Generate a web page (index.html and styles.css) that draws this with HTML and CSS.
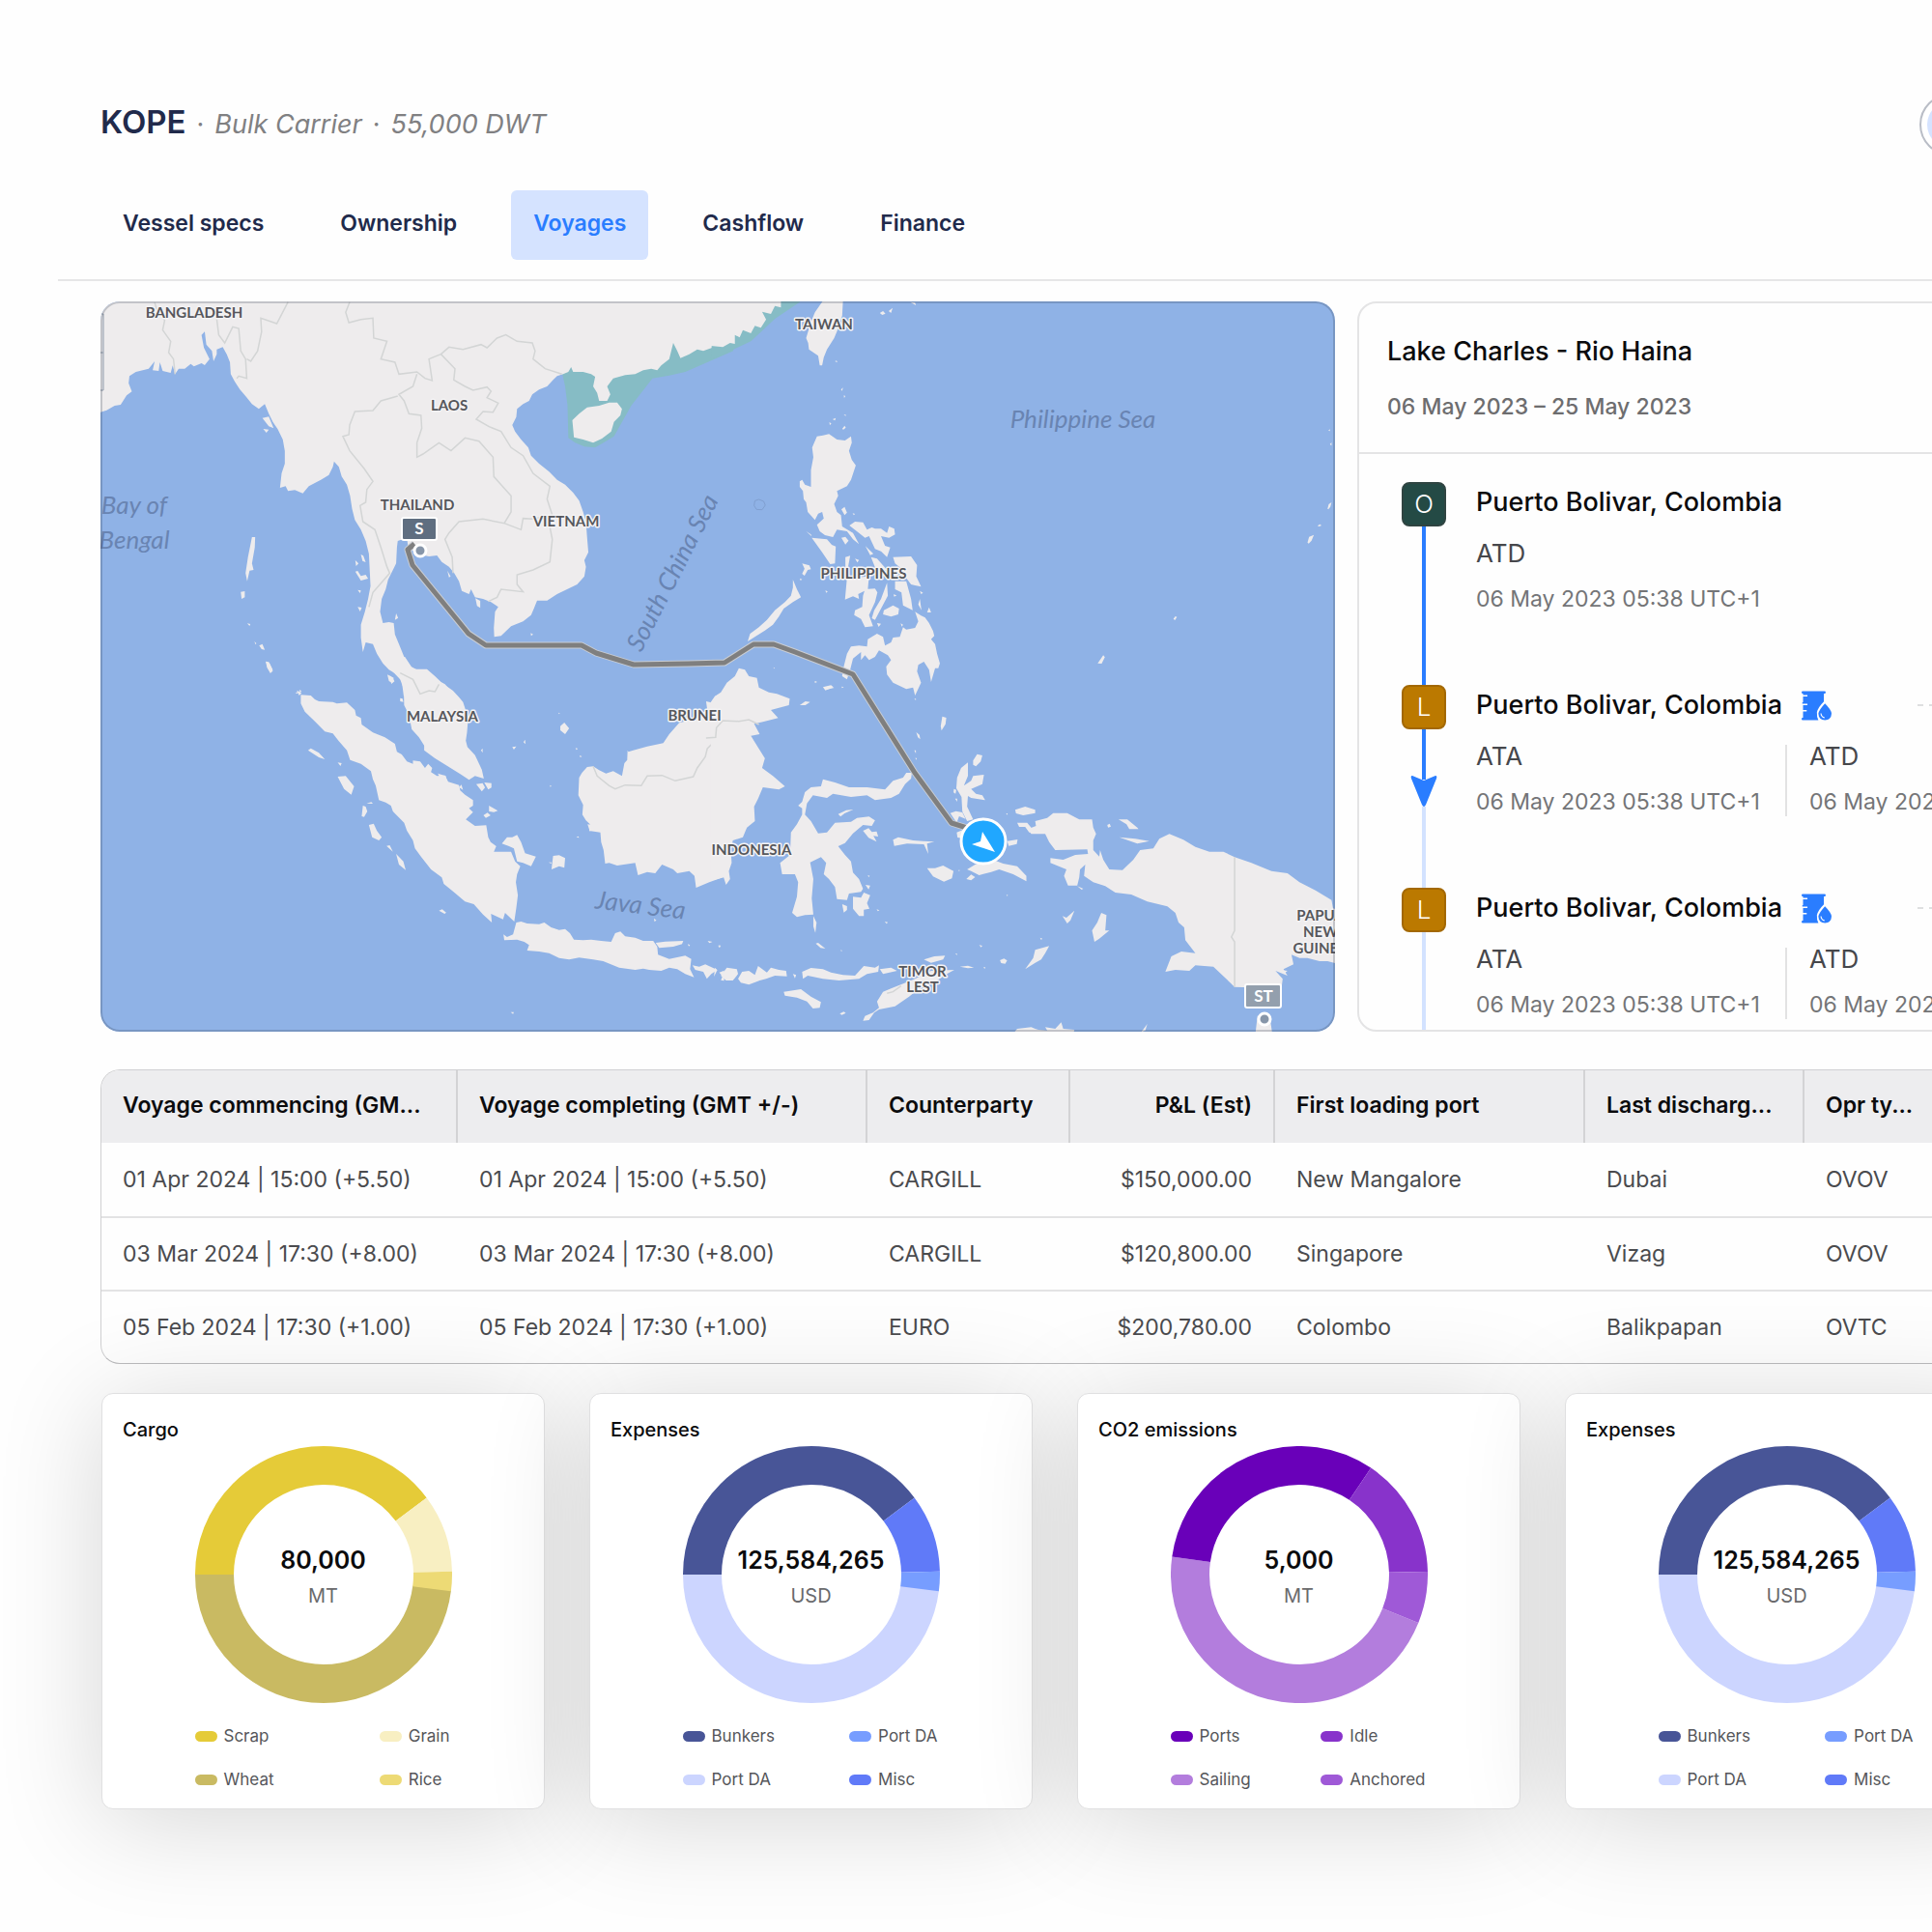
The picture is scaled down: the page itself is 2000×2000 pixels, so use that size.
FILE: index.html
```html
<!DOCTYPE html>
<html lang="en">
<head>
  <meta charset="UTF-8">
  <meta name="viewport" content="width=device-width, initial-scale=1.0">
  <title>KOPE - Voyages</title>
  <link rel="stylesheet" href="styles.css">
</head>
<body>
<div class="page">
  <div class="app">
    <header class="header">
      <div class="title-row">
        <div class="vessel">
          <h1>KOPE</h1>
          <p class="vessel-info"><span>·</span><em>Bulk Carrier</em><span>·</span><em>55,000 DWT</em></p>
        </div>
        <button class="avatar" type="button" aria-label="Account"><span class="avatar-inner"></span></button>
      </div>
      <nav class="tabs">
        <a class="tab" href="#specs">Vessel specs</a>
        <a class="tab" href="#ownership">Ownership</a>
        <a class="tab active" href="#voyages">Voyages</a>
        <a class="tab" href="#cashflow">Cashflow</a>
        <a class="tab" href="#finance">Finance</a>
      </nav>
    </header>

    <main class="main">
      <section class="overview">
        <div class="map">
          <svg class="map-svg" viewBox="104 312 1278 756" role="img" aria-label="Voyage route">
            <rect class="sea" x="104" y="312" width="1278" height="756"/>

            <!-- north west -->
            <g transform="translate(100 300) scale(.41454 .33333)">
              <path class="zone" d="M1162 255L1170 300L1176 360L1178 460L1195 475L1218 487L1245 490L1270 472L1292 455L1335 360L1388 275L1430 266L1470 255L1568 202L1590 190V100H1400Z"/>
              <path class="land" d="M0 20V384L25 374L45 360L60 357L75 328L88 316L80 290L82 268L98 255L130 245L145 222L140 250L155 252L158 225L165 252L185 258L190 235L196 262L205 245L220 245L235 230L243 238L262 228L270 234L282 215L268 180L262 140L270 130L274 170L288 190L292 222L300 200L300 185L315 178L325 200L333 225L335 262L345 285L358 310L372 330L388 355L405 370L420 355L430 385L440 410L452 432L465 465L470 500L470 540L462 570L458 615L472 610L478 625L495 622L515 632L530 610L560 590L580 575L590 550L593 533L605 550L612 580L625 605L633 640L638 680L645 715L660 745L672 780L680 820L682 870L684 920L678 960L670 1000L660 1040L660 1080L665 1125L672 1095L690 1100L700 1130L715 1160L730 1180L750 1195L762 1215L767 1262L895 1262L870 1225L855 1215L845 1205L825 1182L800 1180L785 1170L768 1140L755 1100L745 1070L742 1035L730 1032L715 1035L708 1000L712 960L722 930L728 900L740 870L748 850L750 800L752 780L775 770L778 800L805 822L830 828L850 825L862 845L880 860L893 880L905 905L912 935L930 945L935 930L945 955L965 960L985 970L1003 985L995 1000L992 1050L993 1078L1010 1075L1035 1045L1065 1030L1085 1010L1092 990L1100 965L1125 965L1150 945L1175 930L1200 915L1218 890L1222 860L1218 840L1228 815L1225 770L1222 720L1215 690L1205 655L1190 630L1170 605L1150 590L1130 565L1105 540L1085 515L1078 490L1060 465L1045 440L1038 420L1048 395L1050 370L1065 355L1080 345L1088 325L1105 310L1125 300L1140 280L1150 268L1165 262L1178 255L1185 240L1190 255L1215 255L1235 262L1245 270L1240 300L1250 320L1255 345L1275 345L1283 325L1275 300L1290 275L1320 265L1345 262L1365 250L1385 245L1400 250L1410 235L1430 215L1440 165L1450 190L1458 212L1480 200L1500 185L1515 190L1530 183L1550 175L1570 172V20Z"/>
              <path class="land" d="M1188 405L1205 385L1225 365L1255 360L1280 350L1300 350L1312 370L1308 390L1292 410L1285 440L1262 462L1240 475L1215 465L1192 458Z"/>
              <path class="land" d="M388 768L396 768L395 800L388 850L392 870L382 872L376 905L372 880L378 830ZM360 938L370 936L370 955L362 960ZM376 1036l8 2l-2 6ZM394 1092l5 6l-2 4ZM406 1105l8-5l6 18l-8-2ZM424 1158l8 2l8 24l-6 6l-8-18ZM660 822l6 4l6 20l-8-4ZM646 840l8 10l-6 8ZM646 875l6-2l8 16l12-4l6 12l-18 6ZM652 932l8 2l-2 8ZM652 985l10 2l-4 12ZM672 1095l4 20ZM726 1195l16 10l-4 16l-8-6ZM748 1005l5 14l-8 6ZM862 848l6 12ZM876 872l8 18l-4 3ZM946 958l12 8v22l-8-6ZM922 918l12 4l-6 16ZM1084 1066l6 4l-5 5ZM414 398l16-4l12 36l-12-6ZM416 432l14 2l-6 10ZM500 1244l12 8l-6 8Z"/>
              <path class="border-line" d="M145 40L150 60L170 95L165 125L185 160L180 195L192 215L196 262M300 90L305 140L320 165L340 115L355 120L360 190L372 215L375 275L355 268L350 275M478 38L450 105L410 88L412 130L402 190L385 222L375 215M632 38L622 70L630 102L660 92L690 88L692 150L725 160L710 215L745 225L755 262L800 255L820 275L838 282L830 215L860 200L895 245L892 280L920 300L940 312L975 302L985 315L975 335L1003 352L990 380L965 378L948 402L980 425L1010 440L1035 490L1065 515L1090 570L1132 610L1125 650L1138 700L1130 725L1138 775L1132 845L1090 870L1050 885L1050 915L1065 938L1010 930L1000 955L978 968M860 200L880 178L915 185L960 170L975 180L1000 150L1022 140L1050 160L1088 165L1095 190L1090 215L1120 245L1162 262M800 262L790 300L755 325L768 345L780 385L810 390L812 430L800 475V520L815 510L855 475L885 500L920 460L955 470L990 520L992 580L1010 605L1035 640V690L1018 725L965 712L905 720L880 755L870 775L888 830L890 880M752 330L710 345L690 375L645 378L632 420L630 450L615 455L632 500L668 555L690 595L675 620L672 660L658 670L665 720L695 745L710 800L725 860L732 880L690 940L680 985M1018 725L1060 745L1065 710L1090 712L1138 700M758 1190L790 1210L800 1250"/>
            </g>

            <!-- north east -->
            <g transform="translate(740 300) scale(.41454 .33333)">
              <path class="zone" d="M-10 215L0 210L45 186L90 160L120 125L150 90L212 38L215 20H0Z"/>
              <path class="land" d="M-10 20V174L20 178L38 165L50 168L50 140L62 148L70 125L90 135L100 112L115 118L128 92L118 68L140 75L150 50L165 55L165 38V20Z"/>
              <path class="land" d="M270 34L320 34L318 80L308 120L298 150L280 185L272 210L268 235L262 235L258 205L235 185L233 165L228 150L240 100L250 70Z"/>
              <path class="land" d="M255 455L270 452L285 448L305 465L325 468L340 455L342 475L335 500L342 528L352 545L340 590L330 610L305 625L308 640L298 665L305 690L315 700L318 735L345 755L360 790L345 775L330 750L305 745L295 768L275 762L262 750L255 730L272 710L268 690L258 695L250 715L232 690L228 660L222 650L220 625L212 612L212 595L218 590L225 605L240 612L240 560L246 520L243 490Z"/>
              <path class="land" d="M336 732L350 720L370 722L380 745L392 738L400 742L415 742L430 755L435 735L448 742L450 760L435 770L415 765L425 795L438 800L430 830L415 812L400 805L385 765L375 770L360 755Z"/>
              <path class="land" d="M242 770L280 775L292 792L302 797L300 850L288 852L268 815ZM316 770l10 -3l8 12l-8 12ZM316 682l8-8l6 18l-6 8ZM228 750l12 10l2 6ZM376 796l20 24l-8 4ZM390 830L405 835L430 870L422 872L400 862ZM326 830l12-4l-6 40l-6-4ZM350 835l10 4l-4 8ZM445 830L490 828L505 855L503 890L515 922L500 918L490 915L475 890L462 862L450 850ZM450 905L478 905L490 960L494 995L470 980L466 940L450 930ZM325 962L330 895L385 890L382 930L358 945L360 960L345 952ZM375 930L400 928L406 940L400 970L385 1010L395 1045L375 1048L365 1022L348 1010L350 995L368 985L370 950ZM430 910L432 950L415 990L400 1025L392 1020L398 995L415 960ZM422 995L445 980L460 990L458 1008L440 1015L420 1008ZM405 1035l10 2l-6 10ZM464 1036l6 4l-3 6ZM512 960l4 35l-8-18ZM530 1002l5-16l5 16ZM446 946l8 3l-6 4ZM512 935l8 6l-5 4Z"/>
              <path class="land" d="M82 1092L88 1068L110 1048L130 1025L150 995L175 970L190 950L195 925L195 900L205 930L215 955L195 970L172 990L160 1015L145 1040L125 1058L100 1078ZM218 850l18 6l4 12l-8 2l-8 18l-6-6l6-16ZM276 934l6 3l-4 4ZM212 896l6 3l-4 4Z"/>
              <path class="land" d="M392 1078L405 1068L420 1078L425 1105L440 1095L445 1080L462 1078L470 1048L478 1055L500 1050L508 1030L500 1000L515 1012L525 1018L535 1035L545 1060L548 1075L540 1085L550 1100L555 1130L562 1160L558 1175L550 1175L540 1218L535 1180L522 1155L508 1165L505 1185L515 1220L500 1260L495 1235L478 1240L445 1220L430 1195L428 1170L440 1150L432 1135L410 1120L400 1140L385 1150L375 1135L365 1150L365 1125L345 1145L338 1180L330 1210L318 1200L320 1180L330 1130L340 1108L360 1105L380 1108L382 1085Z"/>
              <path class="land" d="M412 72l8-6l6 8l-8 4ZM434 66l10-10l-4 16ZM488 38l12 2l2 8ZM300 222l4-2l2 6ZM315 310l5-6l-2 10ZM322 328l4 2l-3 6ZM322 388h5v4ZM294 402l8-4l-2 8ZM286 410l5 6l-4 4ZM318 432l6-10l3 6l-6 6ZM344 694l6 2l-3 4ZM956 1160l14-25l4 6l-8 20ZM1145 1022l5-8l4 2l-5 10ZM1480 785l4-18l12-6l-6 18l-7 9ZM1505 733l6-5l4 4l-6 3ZM1530 680l3-14l7-6l-3 14l-5 8ZM1532 437l4-4v6ZM1536 480l4-6v10ZM270 1234l20-6l6 6l-20 10ZM248 1216l5 2l-2 4ZM146 1172l4 3l-2 2ZM316 1232l6 2l-4 3Z"/>
              <path class="reef" d="M100 655l10-4l12 6l4 12l-8 14l-14-1l-6-12Z"/>
            </g>

            <!-- south west -->
            <g transform="translate(100 680) scale(.41454 .33333)">
              <path class="land" d="M715 0L735 40L758 70L767 100L768 150L780 180L787 225L805 250L818 275L818 290L845 315L880 342L910 365L930 382L945 370L967 378L962 350L945 305L926 280L922 260L925 235L928 190L915 140L905 125L890 105L862 80L845 60L825 38L790 38L770 0Z"/>
              <path class="land" d="M510 118L535 120L545 132L555 138L590 140L600 145L625 142L645 165L648 182L660 190L662 210L690 235L720 250L745 270L750 295L762 303L775 325L790 332L790 322L808 325L820 345L828 332L838 345L835 358L850 370L870 368L878 388L905 398L908 415L920 428L940 445L940 462L930 470L940 482L922 505L945 525L973 523L978 560L984 575L998 588L992 605L1035 605L1045 635L1058 650L1050 675L1047 700L1052 740L1048 780L1043 822L1020 795L1015 815L985 798L987 825L965 800L942 768L920 760L890 728L867 705L862 685L835 660L810 620L795 595L790 570L775 540L768 515L740 480L735 462L722 452L705 445L697 400L690 380L685 355L660 332L633 320L625 290L605 262L590 238L570 232L545 200L520 170L510 145Z"/>
              <path class="land" d="M1048 825L1060 822L1075 828L1105 830L1118 825L1135 840L1155 848L1170 845L1182 858L1192 878L1215 880L1235 878L1260 882L1285 885L1295 858L1308 853L1320 868L1345 872L1365 882L1390 882L1400 900L1402 925L1430 938L1470 928L1485 938L1482 970L1492 995L1470 985L1450 970L1430 965L1410 975L1380 972L1365 968L1345 972L1305 965L1265 945L1240 940L1205 934L1180 940L1155 935L1130 920L1105 915L1075 912L1080 895L1068 885L1050 878L1018 880L1016 862L1025 870L1040 862Z"/>
              <path class="land" d="M1396 888L1420 884L1465 882L1462 892L1440 900L1405 904ZM1488 958L1505 962L1520 955L1550 972L1535 985L1524 1000L1515 978L1495 972ZM1555 980l12-6v32l-8-2l4-12ZM1012 580L1025 560L1038 560L1050 553L1060 575L1070 610L1097 620L1085 650L1065 640L1050 635L1042 595L1030 588ZM1140 618L1155 616L1170 625L1168 655L1155 650L1136 660ZM528 290L535 284L555 298L570 318L555 312ZM602 372L622 370L643 402L636 428L618 410ZM665 462L672 465L676 480L668 497L662 495ZM674 455l12-4l4 5ZM680 522L692 518L700 540L712 560L705 570L688 560ZM724 587L732 585L740 605ZM748 612L758 625L766 635L772 662L755 645ZM602 328l10 2l-3 9ZM855 788l8-4l10 10l-4 4ZM1034 1103h8l-2 6ZM422 14l8 2l10 24l-6 10l-8-16ZM496 112l8-4l-2 6ZM506 102l6 4l-4 4ZM732 58l8 8l4 10l-8 8ZM758 128l6 2l2 10l-8-2ZM1158 215L1168 204L1180 222L1170 240L1158 228ZM1066 265l4-8l1 14ZM1038 280l10-2l-6 10ZM1153 173l4 2l-2 3ZM1196 283l6 2l-4 4ZM1206 306l6 3l-4 3ZM1132 398l4 3l-3 3ZM960 290l4-6v14ZM1198 560l5-3l2 5ZM852 362L872 370L876 390L862 385ZM905 405l6-8l4 16ZM948 395l16-3l6 14l-8 12ZM968 390l18 2v14l-8 6ZM980 462l22 16l-10 4l-12-2ZM966 492l10-8l8 8l-12 8ZM1112 634l8 4ZM1128 638h8v4ZM1226 520L1248 524L1232 542ZM1392 812l6 6l-5 4ZM1526 882l12 3l-8 4ZM1552 896l7 3l-4 4ZM1476 892l6 3l-3 4Z"/>
              <path class="land" d="M1570 100L1560 118L1545 122L1535 142L1522 138L1525 165L1510 175L1470 200L1455 205L1430 240L1415 268L1375 278L1340 290L1328 295L1326 290L1325 320L1318 330L1312 370L1290 355L1272 362L1255 352L1240 340L1225 342L1212 360L1205 375L1203 430L1215 460L1213 490L1222 508L1232 520L1230 540L1258 545L1260 575L1266 600L1270 642L1280 640L1300 648L1345 640L1352 678L1375 668L1395 672L1412 645L1440 660L1450 672L1480 665L1493 680L1497 717L1530 700L1570 682Z"/>
              <path class="border-line" d="M758 50L790 70L808 115L830 105L845 108L855 85M1240 340L1250 370L1280 400L1295 410L1320 398L1360 400L1375 370L1412 368L1445 385L1490 372L1500 345L1520 310L1525 285L1545 260L1543 225L1568 195"/>
            </g>

            <!-- south east -->
            <g transform="translate(740 680) scale(.41454 .33333)">
              <path class="land" d="M-10 140L0 122L15 110L30 80L50 60L60 35L75 40L85 60L105 65L110 95L135 110L155 115L187 130L185 150L160 158L140 165L158 190L120 202L98 208L112 240L90 245L105 275L125 315L118 345L145 370L175 402L160 412L120 405L108 440L98 465L100 510L80 530L70 560L45 570L40 600L42 640L35 665L38 690L28 708L22 685L0 692H-10Z"/>
              <path class="land" d="M240 405L265 402L270 380L300 390L335 405L380 405L425 412L445 385L470 375L478 360L492 360L490 378L475 395L460 425L440 438L400 445L380 430L340 435L295 425L280 438L245 430L230 455L225 490L240 510L258 548L280 545L300 515L340 512L355 500L385 496L400 508L392 525L370 522L345 548L325 578L308 588L325 615L340 635L345 670L360 690L370 720L365 730L335 735L330 755L305 752L300 715L285 690L272 675L278 640L265 622L238 638L246 690L242 750L246 800L225 802L205 808L193 795L205 745L208 700L200 675L168 675L163 640L188 615L190 545L205 520L218 490L218 470L208 462L218 450L225 420L240 405Z"/>
              <path class="land" d="M345 745L365 748L372 732L388 740L380 765L386 782L372 785L372 805L360 805L345 782ZM318 768l12 6v12l-8 8ZM376 708l12 2l-4 12ZM246 805l8 20l-3 32l-5-20ZM370 540l14-8l8 12l12-2l4 16l-12-2l8 18l-20-12ZM308 488l20-12l18-2l-22 12l-10 10ZM424 822l8 2l-3 5ZM382 678l5 2l-3 4ZM404 784l7 3l-4 3Z"/>
              <path class="land" d="M603 408L605 375L615 345L632 328L632 370L622 400L640 385L645 370L672 366L668 395L640 410L652 425L668 430L675 445L640 438L632 432L630 465L645 505L630 510L618 480L616 435ZM645 322L655 302L668 306L664 325L652 340L645 335ZM588 485l14-6l16 4l8 20l-16-8l-6 20ZM597 410l6 3l-2 12l-5-4ZM600 440h5v10ZM604 545l20-10v30l-18-4ZM698 456l14 16ZM727 486h4v5Z"/>
              <path class="land" d="M445 568L458 560L495 570L520 572L548 574L530 580L533 612L522 582L480 580L448 587ZM530 656L550 656L570 648L596 665L592 688L572 698L545 682ZM628 690l12-14l10 8l-10 10ZM630 660L650 645L690 628L720 642L755 650L778 680L778 697L745 675L710 660L690 668L660 678L640 665ZM730 572l26-5l-2 14l-20 6ZM616 658l6 6ZM608 662h4l-2 4ZM728 738l4 2l-2 3Z"/>
              <path class="land" d="M800 510L830 500L845 485L880 485L910 505L942 505L945 530L952 550L945 570L945 600L960 620L962 600L970 630L985 660L1018 662L1045 630L1062 600L1095 595L1110 565L1135 550L1170 568L1200 590L1235 605L1270 605L1298 622L1340 640L1390 665L1430 672L1460 700L1500 725L1540 755L1545 790L1560 800V955L1530 945L1510 945L1480 935L1460 935L1440 925L1445 955L1420 970L1430 990L1400 975L1418 1000L1415 1030L1298 1025L1245 962L1200 958L1185 975L1150 972L1125 978L1140 930L1165 915L1200 920L1175 880L1172 840L1158 825L1150 795L1130 775L1080 760L1040 738L1000 732L975 712L945 700L922 680L925 645L912 660L910 685L905 710L882 710L872 680L878 660L838 640L838 625L870 630L900 615L932 612L930 598L850 600L835 575L825 550L790 550L782 535L802 525Z"/>
              <path class="land" d="M750 475L775 465L800 475L800 485L770 492L752 486ZM755 515L780 515L790 530L800 545L785 545L775 528L760 528ZM980 522l6-4l3 9l-7 3ZM1008 505L1030 505L1055 530L1058 535L1035 535L1028 520ZM1010 560L1050 565L1085 572L1055 580ZM905 712l15 8l-4 3ZM948 885L942 850L955 825L965 795L978 802L975 850L985 850L960 875ZM868 805l10 5l20-22l-10 30l-8 10ZM775 970L795 935L800 910L835 898L825 920L815 940L800 950ZM812 872l6 3l-3 4ZM712 942l10-5l8 6l-5 10l-10-2ZM660 895l8 2l-3 5ZM612 962l20-3l15 6l-15 2ZM670 965l5-2v5ZM600 922h5v4ZM252 890l6-2l18 18l-12-2ZM10 895l5 2l-3 3ZM314 910l4 2l-2 3ZM150 323l6 3ZM1502 706l5 6ZM1400 970l30 5l-8 8Z"/>
              <path class="land" d="M15 990L30 965L55 970L58 985L45 1005L28 1005ZM0 965l6 8l-8 20ZM58 1000L68 978L85 975L100 988L108 960L130 980L140 965L160 972L178 975L180 992L150 990L128 1000L112 1005L85 1018L65 1012ZM195 985l8 3l-3 10ZM218 978L240 966L270 970L290 980L320 988L350 990L372 960L400 965L410 958L408 978L380 985L360 1000L310 1005L270 1000L232 990L220 1000ZM412 970L440 965L455 975L420 985ZM172 1040L215 1032L240 1055L265 1072L262 1090L245 1092L230 1070L205 1058L175 1052ZM370 1130L375 1115L395 1105L410 1090L405 1070L420 1040L440 1030L500 1000L540 975L598 972L575 988L555 1005L520 1020L485 1055L450 1085L410 1095L398 1105L385 1128ZM522 940L548 930L575 928L570 940L540 950ZM312 1108l10-6l5 4l-10 6ZM745 1170L755 1155L790 1150L800 1155L808 1158L830 1160L825 1150L850 1155L865 1135L870 1155L898 1158L895 1170ZM1065 1165l15-25l-5 20ZM1350 1170L1355 1115L1385 1110L1392 1170Z"/>
              <path class="land" d="M564 215l4-30l10 4l-2 20l-10 20ZM503 234l8 8l2 14l-6-6ZM498 290h4v10ZM500 314h4v6ZM498 130h4v5ZM212 150l14-12l12 2l-12 10ZM195 165l4 10ZM272 96l14-6l12 6l-20 6ZM250 76h4v4Z"/>
              <path class="border-line" d="M-22 252L2 250L4 220L20 198L60 200L85 195L110 210M1298 622V850L1290 870L1298 885V1025M430 1045L445 1040L465 1022"/>
            </g>

            <!-- edge of the map control -->
            <path class="control-edge" d="M104 325h3v79h-3M104 365h3"/>

            <g class="country">
              <text x="201" y="329">BANGLADESH</text>
              <text x="853" y="341">TAIWAN</text>
              <text x="465" y="425">LAOS</text>
              <text x="432" y="528">THAILAND</text>
              <text x="586" y="545">VIETNAM</text>
              <text x="894" y="599">PHILIPPINES</text>
              <text x="458" y="747">MALAYSIA</text>
              <text x="719" y="746">BRUNEI</text>
              <text x="778" y="885">INDONESIA</text>
              <text x="1367" y="953">PAPUA</text>
              <text x="1367" y="970">NEW</text>
              <text x="1367" y="987">GUINEA</text>
              <text x="955" y="1011">TIMOR</text>
              <text x="955" y="1027">LEST</text>
            </g>
            <g class="sea-name">
              <text x="139" y="532">Bay of</text>
              <text x="139" y="568">Bengal</text>
              <text x="1121" y="443">Philippine Sea</text>
              <text transform="translate(704 597) rotate(-63)">South China Sea</text>
              <text transform="translate(662 946) rotate(7)">Java Sea</text>
            </g>

            <polyline class="route-halo" points="429,563 422,569 427,585 485,656 503,668 556,668 602,668 617,676 656,688 713,687 750,686 780,667 801,667 823,675 883,698 947,800 985,852 1001,857"/>
            <polyline class="route" points="429,563 422,569 427,585 485,656 503,668 556,668 602,668 617,676 656,688 713,687 750,686 780,667 801,667 823,675 883,698 947,800 985,852 1001,857"/>

            <rect class="port start" x="416" y="536" width="36" height="23" rx="2"/>
            <text class="port-text" x="434" y="553">S</text>
            <circle class="port-dot" cx="435" cy="570" r="6"/>
            <rect class="port" x="1289" y="1019" width="37" height="24" rx="2"/>
            <text class="port-text" x="1308" y="1037">ST</text>
            <circle class="port-dot" cx="1309" cy="1055" r="6"/>

            <circle class="ship" cx="1018" cy="871" r="23"/>
            <path fill="#fff" d="M1017 861L1030 882L1006 874L1015 871Z"/>
          </svg>
        </div>

        <section class="voyage">
          <div class="voyage-head">
            <h2 class="voyage-name">Lake Charles - Rio Haina</h2>
            <p class="voyage-dates">06 May 2023 – 25 May 2023</p>
          </div>
          <ol class="steps">
            <li class="step">
              <div class="rail">
                <span class="badge origin">O</span>
                <span class="line"></span>
              </div>
              <div class="step-body">
                <div class="step-title"><h3>Puerto Bolivar, Colombia</h3></div>
                <div class="times">
                  <dl class="time"><dt>ATD</dt><dd>06 May 2023 05:38 UTC+1</dd></dl>
                </div>
              </div>
            </li>
            <li class="step">
              <div class="rail">
                <span class="badge">L</span>
                <span class="line short"></span>
                <svg class="arrow" viewBox="0 0 28 32" aria-hidden="true"><path d="M2 0Q0 0 1 3L12 30Q14 34 16 30L27 3Q28 0 26 0L14 5Z"/></svg>
                <span class="line ahead"></span>
              </div>
              <div class="step-body">
                <div class="step-title">
                  <h3>Puerto Bolivar, Colombia</h3>
                  <svg class="fuel" viewBox="0 0 82 80" aria-hidden="true">
                    <path d="M3 0H63Q66 0 66 3.500T63 7H61V29Q45 45 42 58Q41 70 46 80H3Q0 80 0 76.500T3 73H4V56H14V52H4V39H16V35H2V31H4V15H16V11H4V7H3Q0 7 0 3.500T3 0Z"/>
                    <path d="M64 34Q82 52 82 62Q81 79 64 80Q47 79 46 62Q47 52 64 34Z"/>
                    <path class="fuel-shine" d="M53 61Q54 71 63 73"/>
                  </svg>
                  <span class="dashes"></span>
                </div>
                <div class="times">
                  <dl class="time"><dt>ATA</dt><dd>06 May 2023 05:38 UTC+1</dd></dl>
                  <dl class="time"><dt>ATD</dt><dd>06 May 2023 05:38 UTC+1</dd></dl>
                </div>
              </div>
            </li>
            <li class="step">
              <div class="rail">
                <span class="badge">L</span>
                <span class="line ahead"></span>
              </div>
              <div class="step-body">
                <div class="step-title">
                  <h3>Puerto Bolivar, Colombia</h3>
                  <svg class="fuel" viewBox="0 0 82 80" aria-hidden="true">
                    <path d="M3 0H63Q66 0 66 3.500T63 7H61V29Q45 45 42 58Q41 70 46 80H3Q0 80 0 76.500T3 73H4V56H14V52H4V39H16V35H2V31H4V15H16V11H4V7H3Q0 7 0 3.500T3 0Z"/>
                    <path d="M64 34Q82 52 82 62Q81 79 64 80Q47 79 46 62Q47 52 64 34Z"/>
                    <path class="fuel-shine" d="M53 61Q54 71 63 73"/>
                  </svg>
                  <span class="dashes"></span>
                </div>
                <div class="times">
                  <dl class="time"><dt>ATA</dt><dd>06 May 2023 05:38 UTC+1</dd></dl>
                  <dl class="time"><dt>ATD</dt><dd>06 May 2023 05:38 UTC+1</dd></dl>
                </div>
              </div>
            </li>
          </ol>
        </section>
      </section>

      <div class="table-box">
        <table class="voyages">
          <colgroup>
            <col class="col-start"><col class="col-end"><col class="col-party"><col class="col-pl"><col class="col-first"><col class="col-last"><col>
          </colgroup>
          <thead>
            <tr>
              <th>Voyage commencing (GM...</th>
              <th>Voyage completing (GMT +/-)</th>
              <th>Counterparty</th>
              <th class="num">P&amp;L (Est)</th>
              <th>First loading port</th>
              <th>Last discharg...</th>
              <th>Opr ty...</th>
            </tr>
          </thead>
          <tbody>
            <tr>
              <td>01 Apr 2024 | 15:00 (+5.50)</td>
              <td>01 Apr 2024 | 15:00 (+5.50)</td>
              <td>CARGILL</td>
              <td class="num">$150,000.00</td>
              <td>New Mangalore</td>
              <td>Dubai</td>
              <td>OVOV</td>
            </tr>
            <tr>
              <td>03 Mar 2024 | 17:30 (+8.00)</td>
              <td>03 Mar 2024 | 17:30 (+8.00)</td>
              <td>CARGILL</td>
              <td class="num">$120,800.00</td>
              <td>Singapore</td>
              <td>Vizag</td>
              <td>OVOV</td>
            </tr>
            <tr>
              <td>05 Feb 2024 | 17:30 (+1.00)</td>
              <td>05 Feb 2024 | 17:30 (+1.00)</td>
              <td>EURO</td>
              <td class="num">$200,780.00</td>
              <td>Colombo</td>
              <td>Balikpapan</td>
              <td>OVTC</td>
            </tr>
          </tbody>
        </table>
      </div>

      <section class="cards">
        <article class="card">
          <h2 class="card-title">Cargo</h2>
          <div class="chart">
            <div class="donut">
              <svg viewBox="0 0 266 266" aria-hidden="true">
                <g class="ring" transform="rotate(180 133 133)">
                  <circle cx="133" cy="133" r="113" pathLength="1000" stroke="#c9ba62" stroke-dasharray="480 1000" stroke-dashoffset="-520"/>
                  <circle cx="133" cy="133" r="113" pathLength="1000" stroke="#e5cb38" stroke-dasharray="398 1000"/>
                  <circle cx="133" cy="133" r="113" pathLength="1000" stroke="#f8efc2" stroke-dasharray="98 1000" stroke-dashoffset="-398"/>
                  <circle cx="133" cy="133" r="113" pathLength="1000" stroke="#edda75" stroke-dasharray="25 1000" stroke-dashoffset="-496"/>
                </g>
              </svg>
              <div class="total"><strong>80,000</strong><span>MT</span></div>
            </div>
            <ul class="legend">
              <li><i class="swatch scrap"></i>Scrap</li>
              <li><i class="swatch grain"></i>Grain</li>
              <li><i class="swatch wheat"></i>Wheat</li>
              <li><i class="swatch rice"></i>Rice</li>
            </ul>
          </div>
        </article>

        <article class="card">
          <h2 class="card-title">Expenses</h2>
          <div class="chart">
            <div class="donut">
              <svg viewBox="0 0 266 266" aria-hidden="true">
                <g class="ring" transform="rotate(180 133 133)">
                  <circle cx="133" cy="133" r="113" pathLength="1000" stroke="#ccd5ff" stroke-dasharray="480 1000" stroke-dashoffset="-520"/>
                  <circle cx="133" cy="133" r="113" pathLength="1000" stroke="#485597" stroke-dasharray="398 1000"/>
                  <circle cx="133" cy="133" r="113" pathLength="1000" stroke="#607af8" stroke-dasharray="98 1000" stroke-dashoffset="-398"/>
                  <circle cx="133" cy="133" r="113" pathLength="1000" stroke="#779dff" stroke-dasharray="25 1000" stroke-dashoffset="-496"/>
                </g>
              </svg>
              <div class="total"><strong>125,584,265</strong><span>USD</span></div>
            </div>
            <ul class="legend">
              <li><i class="swatch bunkers"></i>Bunkers</li>
              <li><i class="swatch port-a"></i>Port DA</li>
              <li><i class="swatch port-b"></i>Port DA</li>
              <li><i class="swatch misc"></i>Misc</li>
            </ul>
          </div>
        </article>

        <article class="card">
          <h2 class="card-title">CO2 emissions</h2>
          <div class="chart">
            <div class="donut">
              <svg viewBox="0 0 266 266" aria-hidden="true">
                <g class="ring" transform="rotate(188 133 133)">
                  <circle cx="133" cy="133" r="113" pathLength="1000" stroke="#b37ddd" stroke-dasharray="462 1000" stroke-dashoffset="-539"/>
                  <circle cx="133" cy="133" r="113" pathLength="1000" stroke="#6900b9" stroke-dasharray="322 1000"/>
                  <circle cx="133" cy="133" r="113" pathLength="1000" stroke="#8833cb" stroke-dasharray="152 1000" stroke-dashoffset="-322"/>
                  <circle cx="133" cy="133" r="113" pathLength="1000" stroke="#9f59d7" stroke-dasharray="65 1000" stroke-dashoffset="-474"/>
                </g>
              </svg>
              <div class="total"><strong>5,000</strong><span>MT</span></div>
            </div>
            <ul class="legend">
              <li><i class="swatch ports"></i>Ports</li>
              <li><i class="swatch idle"></i>Idle</li>
              <li><i class="swatch sailing"></i>Sailing</li>
              <li><i class="swatch anchored"></i>Anchored</li>
            </ul>
          </div>
        </article>

        <article class="card">
          <h2 class="card-title">Expenses</h2>
          <div class="chart">
            <div class="donut">
              <svg viewBox="0 0 266 266" aria-hidden="true">
                <g class="ring" transform="rotate(180 133 133)">
                  <circle cx="133" cy="133" r="113" pathLength="1000" stroke="#ccd5ff" stroke-dasharray="480 1000" stroke-dashoffset="-520"/>
                  <circle cx="133" cy="133" r="113" pathLength="1000" stroke="#485597" stroke-dasharray="398 1000"/>
                  <circle cx="133" cy="133" r="113" pathLength="1000" stroke="#607af8" stroke-dasharray="98 1000" stroke-dashoffset="-398"/>
                  <circle cx="133" cy="133" r="113" pathLength="1000" stroke="#779dff" stroke-dasharray="25 1000" stroke-dashoffset="-496"/>
                </g>
              </svg>
              <div class="total"><strong>125,584,265</strong><span>USD</span></div>
            </div>
            <ul class="legend">
              <li><i class="swatch bunkers"></i>Bunkers</li>
              <li><i class="swatch port-a"></i>Port DA</li>
              <li><i class="swatch port-b"></i>Port DA</li>
              <li><i class="swatch misc"></i>Misc</li>
            </ul>
          </div>
        </article>
      </section>
    </main>
  </div>
</div>
</body>
</html>
```
FILE: styles.css
```css
* {
  box-sizing: border-box;
}
body {
  margin: 0;
  font-family: Inter, "Liberation Sans", sans-serif;
  color: #0b0b0d;
  background: #fefefe;
}
h1, h2, h3, p, ol, ul, dl, dd {
  margin: 0;
  padding: 0;
}
ol, ul {
  list-style: none;
}

/* the dashboard runs past the right side of the window */
.page {
  min-height: 100vh;
  padding: 60px 0 60px 60px;
  overflow: hidden;
}
.app {
  margin-right: -124px;
  border-radius: 20px;
}

/* header */
.header {
  padding: 37px 44px 20px;
  border-bottom: 2px solid #e6e6e7;
}
.title-row {
  display: flex;
  align-items: center;
  justify-content: space-between;
}
.vessel {
  display: flex;
  align-items: baseline;
  gap: 11px;
  padding-bottom: 6px;
}
.vessel h1 {
  font-size: 33px;
  line-height: 40px;
  font-weight: 600;
  color: #212a4b;
}
.vessel-info {
  display: flex;
  gap: 11px;
  font-size: 27px;
  color: #808082;
}
.avatar {
  width: 64px;
  height: 64px;
  margin-right: 29px;
  padding: 6px;
  border: 2px solid #b9bdc6;
  border-radius: 50%;
  background: #fff;
}
.avatar-inner {
  display: block;
  height: 100%;
  border-radius: 50%;
  background: #d5e3ff;
}
.tabs {
  display: flex;
  gap: 33px;
  margin-top: 36px;
}
.tab {
  padding: 20px 23px 24px;
  border-radius: 6px;
  font-size: 23px;
  line-height: 28px;
  font-weight: 600;
  color: #212a4b;
  text-decoration: none;
}
.tab.active {
  color: #2a7dff;
  background: #d5e3ff;
}

.main {
  padding: 21px 44px 67px;
}
.overview {
  display: grid;
  grid-template-columns: 1278fr 675fr;
  gap: 23px;
}

/* map */
.map {
  position: relative;
  border-radius: 20px;
  overflow: hidden;
}
.map::after {
  content: "";
  position: absolute;
  inset: 0;
  border: 2px solid rgba(40, 50, 70, 0.22);
  border-radius: 20px;
}
.map-svg {
  display: block;
  width: 100%;
}
.sea {
  fill: #8fb2e6;
}
.land {
  fill: #eeeced;
}
.zone {
  fill: #86bcc5;
}
.border-line {
  fill: none;
  stroke: #d3d5d5;
  stroke-width: 1.5;
  vector-effect: non-scaling-stroke;
}
.reef {
  fill: none;
  stroke: #809fd0;
  vector-effect: non-scaling-stroke;
}
.control-edge {
  fill: none;
  stroke: #8e9aaa;
}
.country {
  font-family: Lato, sans-serif;
  font-size: 15px;
  font-weight: 700;
  text-anchor: middle;
  fill: #56575c;
  stroke: #f4f3f4;
  stroke-width: 3px;
  stroke-linejoin: round;
  paint-order: stroke;
}
.sea-name {
  font-family: Lato, sans-serif;
  font-size: 26px;
  font-style: italic;
  text-anchor: middle;
  fill: #6984b2;
}
.route, .route-halo {
  fill: none;
  stroke: #7f7f7f;
  stroke-width: 5px;
  stroke-linejoin: round;
}
.route-halo {
  stroke: #c9cdd3;
  stroke-width: 7px;
}
.port {
  fill: #939fad;
  stroke: #fff;
  stroke-width: 2px;
}
.port.start {
  fill: #5f6e80;
}
.port-text {
  font-family: Lato, sans-serif;
  font-size: 17px;
  font-weight: 700;
  text-anchor: middle;
  fill: #fff;
}
.port-dot {
  fill: #8796a9;
  stroke: #fff;
  stroke-width: 3px;
}
.ship {
  fill: #20a7ff;
  stroke: #fff;
  stroke-width: 3px;
}

/* voyage panel, as tall as the map beside it */
.voyage {
  height: 0;
  min-height: 100%;
  border: 2px solid #e4e4e5;
  border-radius: 20px;
  overflow: hidden;
}
.voyage-head {
  padding: 33px 29px;
  border-bottom: 2px solid #e4e4e5;
}
.voyage-name {
  font-size: 27px;
  line-height: 34px;
  font-weight: 500;
}
.voyage-dates {
  margin-top: 26px;
  font-size: 23px;
  line-height: 28px;
  font-weight: 500;
  color: #6d6d6f;
}
.steps {
  padding: 29px 0 0 44px;
}
.step {
  display: flex;
  gap: 31px;
  min-height: 210px;
}
.rail {
  display: flex;
  flex-direction: column;
  align-items: center;
}
.badge {
  width: 46px;
  height: 46px;
  border: 2px solid #a36800;
  border-radius: 8px;
  background: #bb7900;
  font-size: 26px;
  line-height: 42px;
  font-weight: 300;
  text-align: center;
  color: #fff;
}
.badge.origin {
  border-color: #2f4441;
  background: #244a45;
}
.line {
  flex: 1;
  width: 4px;
  background: #2a7dff;
}
.line.short {
  flex: 0 0 52px;
}
.line.ahead {
  background: #d3e2ff;
}
.arrow {
  width: 28px;
  height: 32px;
  margin-top: -4px;
  fill: #2a7dff;
}
.step-body {
  flex: 1;
  white-space: nowrap;
}
.step-title {
  display: flex;
  align-items: center;
  gap: 20px;
  margin-bottom: 20px;
}
.step-title h3 {
  font-size: 27px;
  line-height: 42px;
  font-weight: 500;
}
.fuel {
  width: 31px;
  height: 31px;
  fill: #2a7dff;
}
.fuel-shine {
  fill: none;
  stroke: #fff;
  stroke-width: 3;
}
.dashes {
  flex: 1;
  height: 2px;
  margin-left: 69px;
  background: repeating-linear-gradient(90deg, #dedfe0 0 6px, transparent 6px 12px);
}
.times {
  display: flex;
}
.time {
  padding-right: 26px;
}
.time + .time {
  padding-left: 23px;
  border-left: 2px solid #e2e2e3;
}
.time dt {
  font-size: 26px;
  line-height: 24px;
  color: #46474b;
}
.time dd {
  margin-top: 20px;
  font-size: 23px;
  line-height: 30px;
  color: #747577;
}

/* voyages table */
.table-box {
  margin-top: 39px;
  border: 1px solid #d0d0d2;
  border-bottom-color: #bcbcbe;
  border-radius: 20px;
  overflow: hidden;
}
.voyages {
  width: 100%;
  table-layout: fixed;
  border-collapse: separate;
  border-spacing: 0;
}
.col-start { width: 369px; }
.col-end { width: 424px; }
.col-party { width: 210px; }
.col-pl { width: 212px; }
.col-first { width: 321px; }
.col-last { width: 227px; }
.voyages th, .voyages td {
  height: 76px;
  padding: 0 22px;
  font-size: 23px;
  line-height: 28px;
  text-align: left;
  white-space: nowrap;
}
.voyages th {
  height: 75px;
  padding-bottom: 4px;
  border-right: 2px solid #d3d3d5;
  background: #ededef;
  font-weight: 600;
}
.voyages td {
  color: #4a4b4e;
}
.voyages tr + tr td {
  border-top: 2px solid #e3e3e4;
}
.voyages .num {
  text-align: right;
}
.voyages td.num {
  padding-right: 24px;
}

/* charts */
.cards {
  display: grid;
  grid-template-columns: repeat(4, 1fr);
  gap: 46px;
  margin-top: 30px;
  padding: 0 1px;
}
.card {
  padding: 25px 21px 18px;
  border: 1px solid #e0e0e1;
  border-radius: 12px;
  background: #fff;
  box-shadow: 0 12px 110px rgba(0, 0, 0, 0.16);
}
.card-title {
  font-size: 20px;
  line-height: 24px;
  font-weight: 500;
}
.chart {
  width: 266px;
  margin: 5px auto 0;
}
.donut {
  position: relative;
}
.donut svg {
  display: block;
  width: 100%;
}
.ring {
  fill: none;
  stroke-width: 40px;
}
.total {
  position: absolute;
  inset: 0;
  display: flex;
  flex-direction: column;
  align-items: center;
  justify-content: center;
  padding-top: 8px;
}
.total strong {
  font-size: 25px;
  line-height: 36px;
  font-weight: 600;
}
.total span {
  font-size: 20px;
  line-height: 38px;
  color: #6a6a6c;
}
.legend {
  display: grid;
  grid-template-columns: auto auto;
  justify-content: space-between;
  row-gap: 21px;
  margin-top: 22px;
  padding-right: 2px;
  font-size: 17px;
  line-height: 24px;
  color: #55565a;
}
.legend li {
  display: flex;
  align-items: center;
  gap: 7px;
}
.swatch {
  width: 23px;
  height: 11px;
  border-radius: 6px;
}
.scrap { background: #e5cb38; }
.grain { background: #f8efc2; }
.wheat { background: #c9ba62; }
.rice { background: #edda75; }
.bunkers { background: #485597; }
.port-a { background: #779dff; }
.port-b { background: #ccd5ff; }
.misc { background: #607af8; }
.ports { background: #6900b9; }
.idle { background: #8833cb; }
.sailing { background: #b37ddd; }
.anchored { background: #9f59d7; }
```
